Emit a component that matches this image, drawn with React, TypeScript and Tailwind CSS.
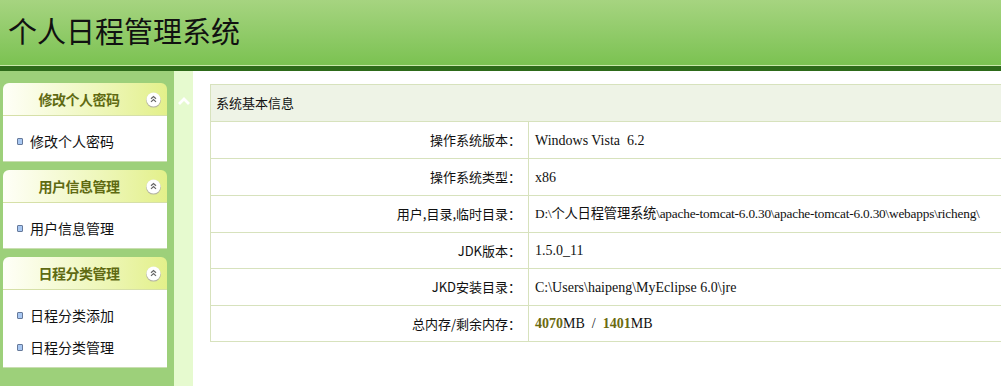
import React from 'react';

const cjk = { fontFamily: '"Noto Sans CJK SC", "Noto Sans", sans-serif' };
const serif = { fontFamily: '"Liberation Serif", "Noto Sans CJK SC", serif' };

const CollapseIcon = () => (
    <svg width="17" height="17" viewBox="0 0 17 17" className="shrink-0">
        <circle cx="8.5" cy="9.2" r="7.4" fill="#b4b4a2" />
        <circle cx="8.5" cy="8.5" r="7" fill="#ffffff" />
        <path d="M6 7.8L8.5 5.5l2.5 2.3M6 10.9L8.5 8.6l2.5 2.3" fill="none" stroke="#666" strokeWidth="1.2" />
    </svg>
);

const Bullet = () => (
    <span className="inline-block w-[6px] h-[7px] rounded-[1px] border border-[#66799a] bg-[#a9c8f2] mr-[7px]" />
);

type Menu = { title: string; items: string[] };

const menus: Menu[] = [
    { title: '修改个人密码', items: ['修改个人密码'] },
    { title: '用户信息管理', items: ['用户信息管理'] },
    { title: '日程分类管理', items: ['日程分类添加', '日程分类管理'] },
];

const MenuPanel = ({ menu }: { menu: Menu }) => (
    <div className="w-[164px]">
        <div className="h-[33px] flex items-center rounded-t-[6px] bg-gradient-to-r from-[#fffff8] to-[#e3f08a] border-b border-[#d6e0a8] pl-[10px] pr-[5px]">
            <span className="flex-1 text-center text-[14px] font-bold text-[#5f6a12] tracking-[-0.5px]" style={cjk}>
                {menu.title}
            </span>
            <CollapseIcon />
        </div>
        <div className="bg-white pt-[9px] pb-[4px] border-b border-[#c9deb1]">
            {menu.items.map((it) => (
                <div key={it} className="h-[32px] flex items-center pl-[14px] text-[14px] text-[#111]" style={cjk}>
                    <Bullet />
                    {it}
                </div>
            ))}
        </div>
    </div>
);

const rows: { label: string; value: React.ReactNode; h: string; small?: boolean }[] = [
    { label: '操作系统版本：', value: 'Windows Vista  6.2', h: 'h-[37px]' },
    { label: '操作系统类型：', value: 'x86', h: 'h-[37px]' },
    {
        label: '用户,目录,临时目录：',
        value: 'D:\\个人日程管理系统\\apache-tomcat-6.0.30\\apache-tomcat-6.0.30\\webapps\\richeng\\',
        h: 'h-[37px]',
        small: true,
    },
    { label: 'JDK版本：', value: '1.5.0_11', h: 'h-[36px]' },
    { label: 'JKD安装目录：', value: 'C:\\Users\\haipeng\\MyEclipse 6.0\\jre', h: 'h-[37px]' },
    {
        label: '总内存/剩余内存：',
        value: (
            <>
                <b className="text-[#6b6a10]">4070</b>
                {'MB  /  '}
                <b className="text-[#6b6a10]">1401</b>MB
            </>
        ),
        h: 'h-[36px]',
    },
];

export default function App() {
    return (
        <div className="w-[1001px] h-[386px] overflow-hidden bg-white flex flex-col">
            <div className="h-[65px] shrink-0 bg-gradient-to-b from-[#a6d480] to-[#7bc251] flex items-center pl-[8px] pb-[4px]">
                <h1 className="text-[29px] leading-none text-[#111]" style={cjk}>
                    个人日程管理系统
                </h1>
            </div>
            <div className="h-px shrink-0 bg-[#c8e7a9]" />
            <div className="h-[5px] shrink-0 bg-[#2d6a19]" />

            <div className="flex flex-1 min-h-0">
                <aside className="w-[174px] shrink-0 bg-[#9dd07a] pt-[12px] pl-[3px] flex flex-col gap-[8px]">
                    {menus.map((m) => (
                        <MenuPanel key={m.title} menu={m} />
                    ))}
                </aside>
                <div className="w-[19px] shrink-0 bg-[#e6facf] flex justify-center pt-[25px]">
                    <svg width="14" height="10" viewBox="0 0 14 10">
                        <path d="M2 8L7 3l5 5" fill="none" stroke="#ffffff" strokeWidth="2.8" />
                    </svg>
                </div>

                <main className="flex-1 min-w-0 overflow-hidden pt-[13px] pl-[17px]">
                    <table className="w-[820px] border-collapse text-[13px] text-[#111]">
                        <tbody>
                            <tr className="h-[37px] bg-[#eef3e6]">
                                <td colSpan={2} className="border border-[#d7e2bd] pl-[5px]" style={cjk}>
                                    系统基本信息
                                </td>
                            </tr>
                            {rows.map((r) => (
                                <tr key={r.label} className={r.h}>
                                    <td className="w-[318px] border border-[#d7e2bd] text-right pr-[7px] whitespace-nowrap" style={cjk}>
                                        {r.label}
                                    </td>
                                    <td
                                        className={`border border-[#d7e2bd] pl-[6px] whitespace-pre ${r.small ? 'text-[13.3px] tracking-[-0.2px]' : 'text-[14px]'}`}
                                        style={serif}
                                    >
                                        {r.value}
                                    </td>
                                </tr>
                            ))}
                        </tbody>
                    </table>
                </main>
            </div>
        </div>
    );
}
